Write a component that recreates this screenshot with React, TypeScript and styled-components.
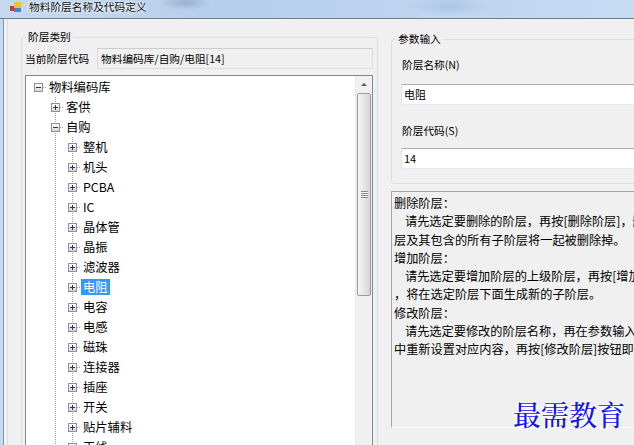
import React from "react";
import styled, { createGlobalStyle } from "styled-components";

const GlobalStyle = createGlobalStyle`
  html, body {
    margin: 0;
    padding: 0;
    background: #f0f0f0;
    overflow: hidden;
  }
  body {
    font-family: "Noto Sans CJK SC", "Microsoft YaHei", sans-serif;
    font-size: 10.7px;
    color: #000;
  }
`;

const Window = styled.div`
  position: relative;
  width: 634px;
  height: 445px;
  display: flex;
  flex-direction: column;
  overflow: hidden;
`;

const TitleBar = styled.div`
  height: 18px;
  flex-shrink: 0;
  display: flex;
  align-items: flex-start;
  gap: 7px;
  padding-left: 10px;
  border-bottom: 1px solid #6f7f91;
  background:
    radial-gradient(ellipse 26px 7px at 185px 3px, rgba(95, 115, 145, 0.35), transparent),
    radial-gradient(ellipse 40px 9px at 450px 6px, rgba(120, 150, 190, 0.25), transparent),
    linear-gradient(to right, #c4d9f0 0%, #b6cfea 35%, #bcd4ee 65%, #c6dcf3 100%);
`;

const TitleIcon = styled.svg`
  margin-top: 2px;
  flex-shrink: 0;
`;

const TitleText = styled.span`
  line-height: 13px;
  font-size: 10.7px;
  color: #111;
  text-shadow: 0 0 5px #fff, 0 0 3px #fff;
`;

const Frame = styled.div`
  flex: 1;
  display: flex;
  min-height: 0;
  border-left: 3px solid #c5d9ef;
`;

const Client = styled.div`
  flex: 1;
  display: flex;
  background: #f0f0f0;
  border-left: 1px solid #8595a8;
  padding-left: 3px;
`;

const Panel = styled.div`
  flex: 1;
  display: flex;
  align-items: flex-start;
  border-left: 1px solid #dedede;
  padding-left: 13px;
`;

const GroupBox = styled.fieldset<{ $top: number; $width: number }>`
  box-sizing: border-box;
  flex-shrink: 0;
  width: ${p => p.$width}px;
  margin: ${p => p.$top}px 0 0 0;
  padding: 0 4px 0 3px;
  min-width: 0;
  border: 1px solid #d5dfe5;
  border-radius: 3px;
`;

const Legend = styled.legend`
  margin-left: 1px;
  padding: 0 2px;
  line-height: 14px;
  font-size: 10.7px;
`;

const CategoryBody = styled.div`
  padding-top: 4px;
  display: flex;
  flex-direction: column;
`;

const CodeRow = styled.div`
  display: flex;
  align-items: center;
  height: 21px;
`;

const RowLabel = styled.span`
  width: 72px;
  flex-shrink: 0;
  white-space: nowrap;
`;

const ReadOnlyBox = styled.div`
  flex: 1;
  box-sizing: border-box;
  height: 21px;
  line-height: 19px;
  padding-left: 3px;
  border: 1px solid #dcdcdc;
  border-top-color: #cdcdcd;
  background: #f0f0f0;
  white-space: nowrap;
`;

const TreeBox = styled.div`
  margin-top: 6px;
  height: 400px;
  display: flex;
  border: 1px solid #828790;
  background: #fff;
`;

const TreeList = styled.div`
  flex: 1;
  padding-top: 1px;
  font-size: 12.3px;
`;

const TreeRow = styled.div`
  display: flex;
  height: 20px;
  padding-left: 4px;
`;

const Cell = styled.div<{ $v?: boolean; $h?: boolean }>`
  position: relative;
  width: 17px;
  flex-shrink: 0;
  display: flex;
  align-items: flex-start;
  padding-left: 4px;
  box-sizing: border-box;

  &::before {
    content: "";
    display: ${p => (p.$v ? "block" : "none")};
    position: absolute;
    left: 8px;
    top: 0;
    width: 1px;
    height: 100%;
    background: repeating-linear-gradient(to bottom, #a0a0a0 0 1px, transparent 1px 2px);
  }
  &::after {
    content: "";
    display: ${p => (p.$h ? "block" : "none")};
    position: absolute;
    left: 13px;
    top: 10px;
    width: 4px;
    height: 1px;
    background: repeating-linear-gradient(to right, #a0a0a0 0 1px, transparent 1px 2px);
  }
`;

const Expander = styled.span<{ $open?: boolean }>`
  position: relative;
  z-index: 1;
  margin-top: 6px;
  width: 9px;
  height: 9px;
  box-sizing: border-box;
  border: 1px solid #919191;
  background: linear-gradient(#ffffff, #d6d6d6);

  &::before {
    content: "";
    position: absolute;
    left: 1px;
    top: 3px;
    width: 5px;
    height: 1px;
    background: #27336e;
  }
  &::after {
    content: "";
    display: ${p => (p.$open ? "none" : "block")};
    position: absolute;
    left: 3px;
    top: 1px;
    width: 1px;
    height: 5px;
    background: #27336e;
  }
`;

const NodeLabel = styled.span<{ $selected?: boolean }>`
  margin-top: 2px;
  height: 16px;
  line-height: 16px;
  padding: 0 2px;
  white-space: nowrap;
  background: ${p => (p.$selected ? "#3399ff" : "transparent")};
  color: ${p => (p.$selected ? "#fff" : "#000")};
`;

const ScrollBar = styled.div`
  width: 17px;
  flex-shrink: 0;
  display: flex;
  flex-direction: column;
  background: #f0f0f0;
  border-left: 1px solid #e9e9e9;
  box-sizing: border-box;
`;

const ScrollButton = styled.div`
  height: 17px;
  display: flex;
  align-items: center;
  justify-content: center;

  &::before {
    content: "";
    border-left: 3px solid transparent;
    border-right: 3px solid transparent;
    border-bottom: 3px solid #5a5a5a;
  }
`;

const Thumb = styled.div`
  height: 203px;
  margin: 0 1px 0 1px;
  box-sizing: border-box;
  border: 1px solid #9a9a9a;
  border-radius: 2px;
  background: linear-gradient(to right, #f5f5f5, #e8e8e8 45%, #d4d4d4);
  display: flex;
  align-items: center;
  justify-content: center;
`;

const Gripper = styled.div`
  width: 7px;
  height: 7px;
  background: repeating-linear-gradient(to bottom, #8a8a8a 0 1px, #f6f6f6 1px 2px);
`;

const RightColumn = styled.div`
  width: 260px;
  flex-shrink: 0;
  margin-left: 13px;
  display: flex;
  flex-direction: column;
`;

const ParamBody = styled.div`
  padding: 12px 0 14px 6px;
  display: flex;
  flex-direction: column;
`;

const ParamLabel = styled.span<{ $gap: number }>`
  margin-top: ${p => p.$gap}px;
  padding-left: 1px;
  line-height: 14px;
`;

const TextInput = styled.div<{ $gap: number }>`
  margin-top: ${p => p.$gap}px;
  height: 21px;
  box-sizing: border-box;
  line-height: 19px;
  padding-left: 2px;
  background: #fff;
  border: 1px solid;
  border-color: #abadb3 #dbdfe6 #e3e9ef #e2e3ea;
  font-size: 11px;
`;

const InfoBox = styled.div`
  margin-top: 7px;
  height: 237px;
  box-sizing: border-box;
  padding: 2px 0 0 2px;
  border: 1px solid;
  border-color: #a5a5a5 #ffffff #ffffff #a5a5a5;
  background: #f0f0f0;
  font-size: 12.2px;
  line-height: 18.25px;
  overflow: hidden;
`;

const InfoLine = styled.div<{ $indent?: boolean }>`
  white-space: nowrap;
  padding-left: ${p => (p.$indent ? 11 : 0)}px;
`;

const Watermark = styled.div`
  position: absolute;
  right: 9px;
  bottom: 17px;
  font-family: "Noto Serif CJK SC", "AR PL UKai CN", "Noto Sans CJK SC", serif;
  font-size: 28px;
  font-weight: 500;
  line-height: 28px;
  color: #1414f0;
  text-shadow: 0 0 2px #fff, 0 0 3px #fff, 0 0 4px #fff, 1px 1px 2px #fff;
`;

interface NodeData {
  label: string;
  level: number;
  guides: boolean[];
  vline: boolean;
  open?: boolean;
  selected?: boolean;
}

const parts = [
  "整机", "机头", "PCBA", "IC", "晶体管", "晶振", "滤波器", "电阻",
  "电容", "电感", "磁珠", "连接器", "插座", "开关", "贴片辅料", "天线",
];

const nodes: NodeData[] = [
  { label: "物料编码库", level: 0, guides: [], vline: false, open: true },
  { label: "客供", level: 1, guides: [false], vline: true },
  { label: "自购", level: 1, guides: [false], vline: true, open: true },
  ...parts.map(p => ({
    label: p,
    level: 2,
    guides: [false, true],
    vline: true,
    selected: p === "电阻",
  })),
];

const info = [
  { text: "删除阶层：" },
  { text: "请先选定要删除的阶层，再按[删除阶层]，删除", indent: true },
  { text: "层及其包含的所有子阶层将一起被删除掉。" },
  { text: "增加阶层：" },
  { text: "请先选定要增加阶层的上级阶层，再按[增加阶层]按钮", indent: true },
  { text: "，将在选定阶层下面生成新的子阶层。" },
  { text: "修改阶层：" },
  { text: "请先选定要修改的阶层名称，再在参数输入框", indent: true },
  { text: "中重新设置对应内容，再按[修改阶层]按钮即可。" },
];

function TreeNode({ node }: { node: NodeData }) {
  return (
    <TreeRow>
      {node.guides.map((g, i) => (
        <Cell key={i} $v={g} />
      ))}
      <Cell $v={node.vline} $h>
        <Expander $open={node.open} />
      </Cell>
      <NodeLabel $selected={node.selected}>{node.label}</NodeLabel>
    </TreeRow>
  );
}

export default function App() {
  return (
    <Window>
      <GlobalStyle />
      <TitleBar>
        <TitleIcon width="12" height="10" viewBox="0 0 12 10">
          <rect x="0" y="4" width="5" height="5" fill="#d8352a" />
          <rect x="4" y="0" width="7" height="6" fill="#f4c21c" />
          <rect x="4" y="6" width="7" height="4" fill="#4a80cf" />
        </TitleIcon>
        <TitleText>物料阶层名称及代码定义</TitleText>
      </TitleBar>
      <Frame>
        <Client>
          <Panel>
            <GroupBox $top={11} $width={357}>
              <Legend>阶层类别</Legend>
              <CategoryBody>
                <CodeRow>
                  <RowLabel>当前阶层代码</RowLabel>
                  <ReadOnlyBox>物料编码库/自购/电阻[14]</ReadOnlyBox>
                </CodeRow>
                <TreeBox>
                  <TreeList>
                    {nodes.map((n, i) => (
                      <TreeNode key={i} node={n} />
                    ))}
                  </TreeList>
                  <ScrollBar>
                    <ScrollButton />
                    <Thumb>
                      <Gripper />
                    </Thumb>
                  </ScrollBar>
                </TreeBox>
              </CategoryBody>
            </GroupBox>
            <RightColumn>
              <GroupBox $top={13} $width={260}>
                <Legend>参数输入</Legend>
                <ParamBody>
                  <ParamLabel $gap={0}>阶层名称(N)</ParamLabel>
                  <TextInput $gap={12}>电阻</TextInput>
                  <ParamLabel $gap={19}>阶层代码(S)</ParamLabel>
                  <TextInput $gap={10}>14</TextInput>
                </ParamBody>
              </GroupBox>
              <InfoBox>
                {info.map((l, i) => (
                  <InfoLine key={i} $indent={l.indent}>
                    {l.text}
                  </InfoLine>
                ))}
              </InfoBox>
            </RightColumn>
          </Panel>
        </Client>
      </Frame>
      <Watermark>最需教育</Watermark>
    </Window>
  );
}
